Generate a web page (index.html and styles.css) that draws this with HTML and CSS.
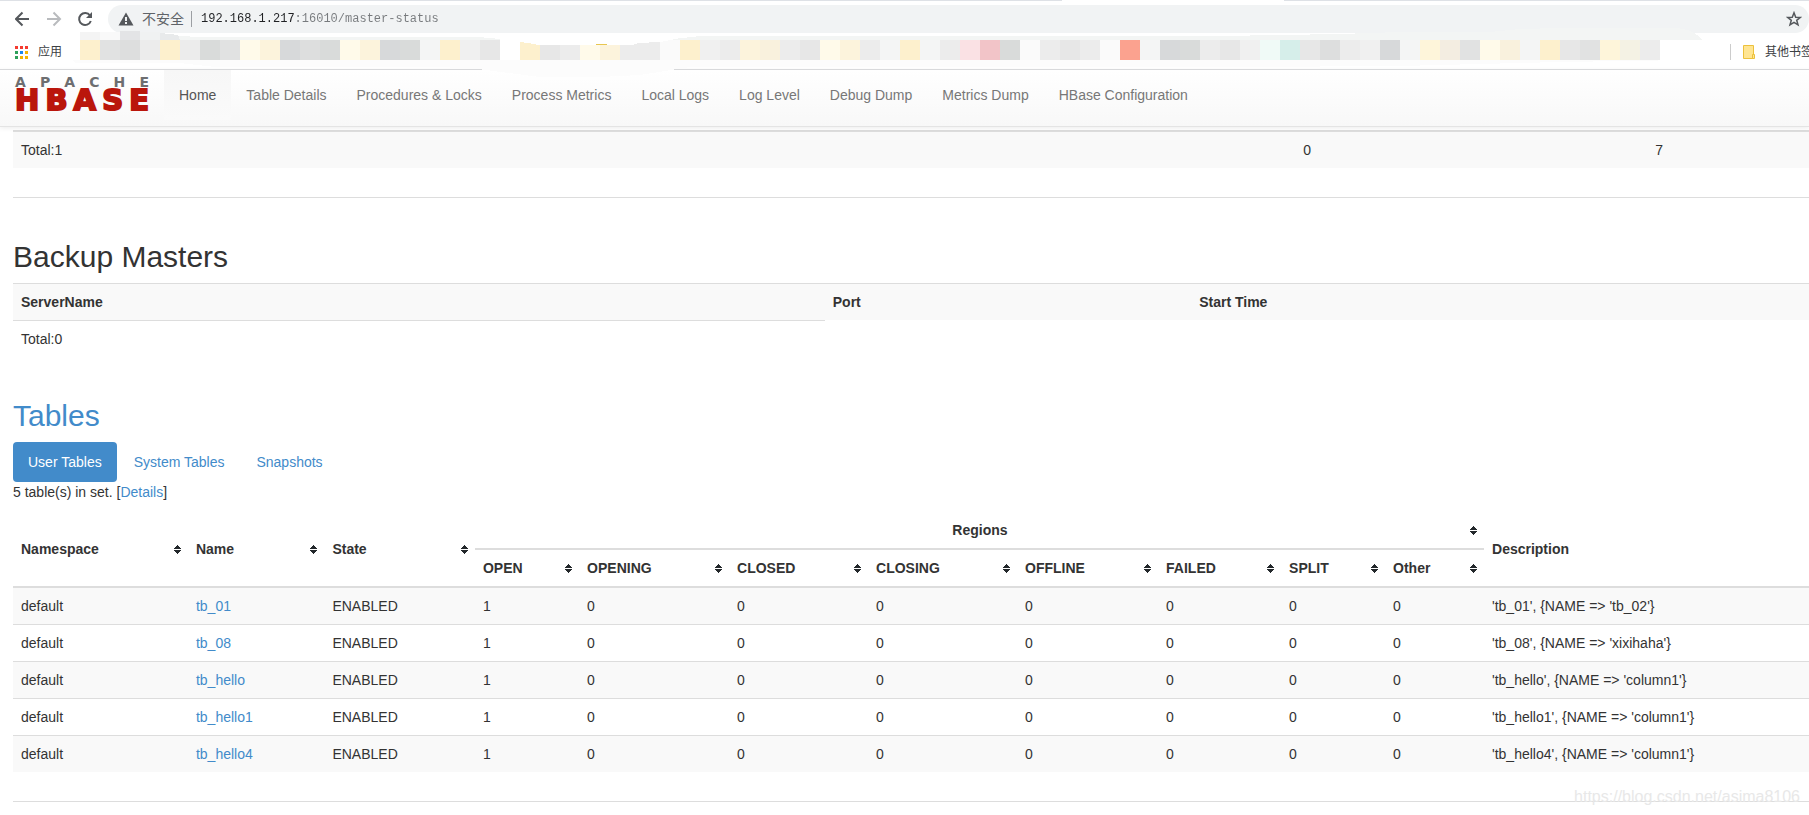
FILE: index.html
```html
<!DOCTYPE html>
<html lang="zh-CN">
<head>
<meta charset="utf-8">
<title>Master: HBase</title>
<link rel="stylesheet" href="styles.css">
</head>
<body>
<svg class="defs" aria-hidden="true">
  <symbol id="sort" viewBox="0 0 7 9"><path d="M3 0h1v1h1v1h1v1h1v1H0V3h1V2h1V1h1zM0 5h7v1H6v1H5v1H4v1H3V8H2V7H1V6H0z" fill="#23282b"/></symbol>
</svg>

<header class="browser">
  <div class="tabstrip"></div>
  <div class="toolbar">
    <button class="tool" type="button" aria-label="Back"><svg width="16" height="16" viewBox="0 0 16 16"><path d="M14 8H1.500M7.500 1.500L1 8l6.500 6.500" fill="none" stroke="#55585c" stroke-width="2"/></svg></button>
    <button class="tool" type="button" aria-label="Forward"><svg width="16" height="16" viewBox="0 0 16 16"><path d="M1 8h12.500M7.500 1.500L14 8l-6.500 6.500" fill="none" stroke="#b9bbbe" stroke-width="2"/></svg></button>
    <button class="tool" type="button" aria-label="Reload"><svg width="16" height="16" viewBox="0 0 16 16"><path d="M13 4.500A6 6 0 1 0 13.800 10" fill="none" stroke="#55585c" stroke-width="2"/><path d="M15 1v6H9z" fill="#55585c"/></svg></button>
    <div class="omnibox">
      <svg width="16" height="14" viewBox="0 0 16 14"><path d="M8 0.500L15.500 13.500H0.500z" fill="#55585c"/><path d="M7 5h2v4H7zM7 10h2v2H7z" fill="#f1f3f4"/></svg>
      <label class="insecure" for="url">不安全</label>
      <input class="url" id="url" type="text" value="192.168.1.217:16010/master-status" spellcheck="false">
      <button class="star" type="button" aria-label="Bookmark"><svg width="16" height="16" viewBox="0 0 16 16"><path d="M8 1.800l1.700 4.400 4.700.2-3.700 2.900 1.300 4.600L8 11.300l-4 2.600 1.300-4.600-3.700-2.900 4.700-.2z" fill="none" stroke="#55585c" stroke-width="1.500"/></svg></button>
    </div>
  </div>
  <div class="bookmarks">
    <a class="bookmark" href="#"><svg width="13" height="13" viewBox="0 0 13 13"><path d="M0 0h3v3H0zM5 0h3v3H5zM10 0h3v3h-3z" fill="#f43b30"/><path d="M0 5h3v3H0zM0 10h3v3H0z" fill="#2da05a"/><path d="M5 5h3v3H5z" fill="#1a87f0"/><path d="M10 5h3v3h-3zM5 10h3v3H5zM10 10h3v3h-3z" fill="#f5b400"/></svg>应用</a>
    <a class="bookmark other" href="#"><svg width="12" height="14" viewBox="0 0 12 14"><path d="M.5.500h10v13H.500z" fill="#ffe592" stroke="#ecc13c"/><path d="M9.500 9.500h2v4h-2z" fill="#ffe592" stroke="#ecc13c"/></svg>其他书签</a>
  </div>
  <svg class="mosaic" width="1635" height="50" viewBox="70 28 1635 50" shape-rendering="crispEdges" aria-hidden="true">
    <path d="M80 40V36H180L200 37H478L500 39V40zM665 40L700 36H1220L1340 34L1400 32H1490L1520 29L1560 28H1675Q1694 29 1702 40z" fill="#f3f5f4"/>
    <path d="M72 60H1690L1560 62L1400 66H1340L1300 67H690L640 75L600 77H540L478 69L440 67H215L180 63H76z" fill="#fcfcfc"/>
    <path d="M80 32h20v8H80z" fill="#f4f4f4"/><path d="M100 32h20v8h-20z" fill="#f9f9f9"/><path d="M120 31h20v9h-20z" fill="#e3e4e6"/><path d="M140 32h20v8h-20z" fill="#f0f2f2"/><path d="M160 33l18 2 2 5h-20z" fill="#e8eaeb"/>
    <g>
      <path d="M80 40h20v20H80zM160 40h20v20h-20zM440 40h20v20h-20zM520 40h20v20h-20zM680 40h20v20h-20zM900 40h20v20h-20zM1540 40h20v20h-20z" fill="#fdf0cd"/>
      <path d="M240 40h20v20h-20zM340 40h20v20h-20zM580 40h20v20h-20zM820 40h20v20h-20zM1480 40h20v20h-20z" fill="#fffaea"/>
      <path d="M260 40h20v20h-20zM360 40h20v20h-20zM600 40h20v20h-20zM740 40h20v20h-20zM840 40h20v20h-20z" fill="#fcf3dc"/>
      <path d="M1420 40h20v20h-20zM1600 40h20v20h-20z" fill="#fef5da"/>
      <path d="M760 40h20v20h-20zM1500 40h20v20h-20z" fill="#f9f1dd"/>
      <path d="M1440 40h20v20h-20z" fill="#f3ede1"/><path d="M1620 40h20v20h-20z" fill="#f4f2e4"/>
      <path d="M280 40h20v20h-20zM380 40h20v20h-20zM1160 40h20v20h-20zM1380 40h20v20h-20z" fill="#d7d9da"/>
      <path d="M200 40h20v20h-20zM320 40h20v20h-20zM400 40h20v20h-20zM1000 40h20v20h-20zM1180 40h20v20h-20z" fill="#d9dbda"/>
      <path d="M120 40h20v20h-20zM300 40h20v20h-20zM1320 40h20v20h-20z" fill="#dddede"/>
      <path d="M100 40h20v20h-20zM220 40h20v20h-20zM1460 40h20v20h-20zM1580 40h20v20h-20z" fill="#e1e2e2"/>
      <path d="M480 40h20v20h-20zM540 40h20v20h-20zM800 40h20v20h-20zM1060 40h20v20h-20zM1220 40h20v20h-20zM1300 40h20v20h-20zM1560 40h20v20h-20z" fill="#e7e7e7"/>
      <path d="M140 40h20v20h-20zM180 40h20v20h-20zM560 40h20v20h-20zM620 40h40v20h-40zM720 40h20v20h-20zM780 40h20v20h-20zM860 40h20v20h-20zM940 40h20v20h-20zM1040 40h20v20h-20zM1080 40h20v20h-20zM1200 40h20v20h-20zM1340 40h20v20h-20zM1640 40h20v20h-20z" fill="#ececec"/>
      <path d="M460 40h20v20h-20zM700 40h20v20h-20zM1240 40h20v20h-20zM1360 40h20v20h-20z" fill="#f0f0f0"/>
      <path d="M420 40h20v20h-20zM880 40h20v20h-20zM920 40h20v20h-20zM1140 40h20v20h-20zM1400 40h20v20h-20zM1520 40h20v20h-20z" fill="#f4f5f5"/>
      <path d="M660 40h20v20h-20zM1020 40h20v20h-20zM1100 40h20v20h-20z" fill="#fafafa"/>
      <path d="M960 40h20v20h-20z" fill="#fae1e4"/><path d="M980 40h20v20h-20z" fill="#f2c4c8"/>
      <path d="M1120 40h20v20h-20z" fill="#fba28f"/>
      <path d="M1260 40h20v20h-20z" fill="#f0faf7"/><path d="M1280 40h20v20h-20z" fill="#d6eeea"/>
    </g>
    <path d="M500 34H700L680 38L660 42L638 43L632 45H538L528 43L520 42V60H500z" fill="#fff"/>
    <path d="M596 44h11v1h-11z" fill="#e8c650"/>
  </svg>
</header>

<nav class="navbar">
  <a class="brand" href="#" aria-label="Apache HBase">
    <span class="apache"><span>A</span><span>P</span><span>A</span><span>C</span><span>H</span><span>E</span></span>
    <span class="hbase"><span>H</span><span>B</span><span>A</span><span>S</span><span>E</span></span>
  </a>
  <a class="nav-link active" href="#">Home</a>
  <a class="nav-link" href="#">Table Details</a>
  <a class="nav-link" href="#">Procedures &amp; Locks</a>
  <a class="nav-link" href="#">Process Metrics</a>
  <a class="nav-link" href="#">Local Logs</a>
  <a class="nav-link" href="#">Log Level</a>
  <a class="nav-link" href="#">Debug Dump</a>
  <a class="nav-link" href="#">Metrics Dump</a>
  <a class="nav-link" href="#">HBase Configuration</a>
</nav>

<main class="page">
  <table class="table servers">
    <colgroup><col class="s-name"><col class="s-rate"><col></colgroup>
    <tbody><tr><td>Total:1</td><td>0</td><td>7</td></tr></tbody>
  </table>
  <hr>

  <section class="section">
    <h2>Backup Masters</h2>
    <table class="table backup">
      <colgroup><col class="b-name"><col class="b-port"><col></colgroup>
      <tbody>
        <tr><th scope="col">ServerName</th><th scope="col">Port</th><th scope="col">Start Time</th></tr>
        <tr><td>Total:0</td></tr>
      </tbody>
    </table>
  </section>

  <section class="section">
    <h2><a href="#">Tables</a></h2>
    <div class="pills">
      <a class="pill active" href="#">User Tables</a>
      <a class="pill" href="#">System Tables</a>
      <a class="pill" href="#">Snapshots</a>
    </div>
    <p class="summary">5 table(s) in set. [<a href="#">Details</a>]</p>
    <table class="table regions">
      <colgroup><col class="c-ns"><col class="c-name"><col class="c-state"><col class="c-open"><col class="c-opening"><col class="c-closed"><col class="c-closing"><col class="c-offline"><col class="c-failed"><col class="c-split"><col class="c-other"><col></colgroup>
      <thead>
        <tr>
          <th rowspan="2"><button class="sort" type="button">Namespace<svg><use href="#sort"/></svg></button></th>
          <th rowspan="2"><button class="sort" type="button">Name<svg><use href="#sort"/></svg></button></th>
          <th rowspan="2"><button class="sort" type="button">State<svg><use href="#sort"/></svg></button></th>
          <th colspan="8"><button class="sort centered" type="button"><span>Regions</span><svg><use href="#sort"/></svg></button></th>
          <th rowspan="2">Description</th>
        </tr>
        <tr>
          <th><button class="sort" type="button">OPEN<svg><use href="#sort"/></svg></button></th>
          <th><button class="sort" type="button">OPENING<svg><use href="#sort"/></svg></button></th>
          <th><button class="sort" type="button">CLOSED<svg><use href="#sort"/></svg></button></th>
          <th><button class="sort" type="button">CLOSING<svg><use href="#sort"/></svg></button></th>
          <th><button class="sort" type="button">OFFLINE<svg><use href="#sort"/></svg></button></th>
          <th><button class="sort" type="button">FAILED<svg><use href="#sort"/></svg></button></th>
          <th><button class="sort" type="button">SPLIT<svg><use href="#sort"/></svg></button></th>
          <th><button class="sort" type="button">Other<svg><use href="#sort"/></svg></button></th>
        </tr>
      </thead>
      <tbody>
        <tr><td>default</td><td><a href="#">tb_01</a></td><td>ENABLED</td><td>1</td><td>0</td><td>0</td><td>0</td><td>0</td><td>0</td><td>0</td><td>0</td><td>'tb_01', {NAME =&gt; 'tb_02'}</td></tr>
        <tr><td>default</td><td><a href="#">tb_08</a></td><td>ENABLED</td><td>1</td><td>0</td><td>0</td><td>0</td><td>0</td><td>0</td><td>0</td><td>0</td><td>'tb_08', {NAME =&gt; 'xixihaha'}</td></tr>
        <tr><td>default</td><td><a href="#">tb_hello</a></td><td>ENABLED</td><td>1</td><td>0</td><td>0</td><td>0</td><td>0</td><td>0</td><td>0</td><td>0</td><td>'tb_hello', {NAME =&gt; 'column1'}</td></tr>
        <tr><td>default</td><td><a href="#">tb_hello1</a></td><td>ENABLED</td><td>1</td><td>0</td><td>0</td><td>0</td><td>0</td><td>0</td><td>0</td><td>0</td><td>'tb_hello1', {NAME =&gt; 'column1'}</td></tr>
        <tr><td>default</td><td><a href="#">tb_hello4</a></td><td>ENABLED</td><td>1</td><td>0</td><td>0</td><td>0</td><td>0</td><td>0</td><td>0</td><td>0</td><td>'tb_hello4', {NAME =&gt; 'column1'}</td></tr>
      </tbody>
    </table>
  </section>
  <hr>
</main>
<div class="watermark">https://blog.csdn.net/asima8106</div>
</body>
</html>
```

FILE: styles.css
```css
* { box-sizing: border-box; }

body {
  position: relative;
  min-height: 100vh;
  margin: 0;
  overflow-x: hidden;
  background: #fff;
  color: #333;
  font: 14px/20px "Liberation Sans", "Noto Sans CJK SC", sans-serif;
}

a { color: #428bca; text-decoration: none; }

button {
  margin: 0;
  padding: 0;
  border: 0;
  background: none;
  color: inherit;
  font: inherit;
  cursor: pointer;
}

svg { display: block; flex: none; }

.defs { position: absolute; width: 0; height: 0; }

/* Browser chrome */
.browser { position: relative; z-index: 2; }

.tabstrip {
  height: 1px;
  background: linear-gradient(to right, #dee1e6 1062px, #fff 1062px 1284px, #dee1e6 1284px);
}

.toolbar {
  display: flex;
  align-items: center;
  gap: 15px;
  padding: 4px 0 2px 15px;
}

.omnibox {
  display: flex;
  flex: 1;
  align-items: center;
  height: 28px;
  padding: 0 7px 0 10px;
  border-radius: 14px;
  background: #f1f3f4;
}

.insecure {
  margin: 0 7px 0 8px;
  color: #5f6368;
  font-size: 14px;
}

.url {
  flex: 1;
  min-width: 0;
  height: 16px;
  padding: 0 0 0 9px;
  border: 0;
  border-left: 1px solid #9c9fa3;
  outline: 0;
  background: linear-gradient(to right, #202124 13ch, #777a7d 13ch) content-box text;
  color: transparent;
  font: 12px/16px "Liberation Mono", monospace;
}

.bookmarks {
  display: flex;
  align-items: center;
  justify-content: space-between;
  height: 35px;
  padding-left: 15px;
  border-bottom: 1px solid #d8d9db;
}

.bookmark {
  display: flex;
  align-items: center;
  gap: 10px;
  height: 16px;
  color: #3c4043;
  font-size: 12px;
  line-height: 16px;
}

.bookmark.other {
  width: 79px;
  padding-left: 12px;
  border-left: 1px solid #ccc;
  overflow: hidden;
  white-space: nowrap;
}

.mosaic { position: absolute; top: 28px; left: 70px; pointer-events: none; }

/* Navigation */
.navbar {
  position: relative;
  z-index: 1;
  display: flex;
  align-items: flex-start;
  height: 57px;
  padding-left: 15px;
  border-bottom: 1px solid #e4e4e4;
  background: linear-gradient(#fff, #f8f8f8);
  box-shadow: 0 1px 5px rgba(0, 0, 0, 0.08);
}

.brand {
  width: 134px;
  margin-right: 15px;
  padding-top: 6px;
  font-family: "DejaVu Sans", sans-serif;
  font-weight: bold;
}

.apache, .hbase { display: flex; justify-content: space-between; }

.apache {
  color: #6d6e71;
  font-size: 14px;
  line-height: 13px;
}

.hbase {
  color: #ba160c;
  font-size: 29px;
  line-height: 22px;
  -webkit-text-stroke: 2px #ba160c;
}

.nav-link { padding: 15px; color: #777; }

.nav-link.active {
  background: linear-gradient(#f7f7f7, #fafafa);
  color: #555;
}

/* Page content */
.page { padding: 3px 0 0 13px; }

h2 {
  margin: 0 0 10px;
  font-size: 30px;
  font-weight: normal;
  line-height: 33px;
}

hr { height: 1px; margin: 29px 0 0; border: 0; background: #ddd; }

.section { margin-top: 42px; }

.table {
  width: 100%;
  border-spacing: 0;
  table-layout: fixed;
  text-align: left;
}

th, td { padding: 8px; }

.servers td { border-top: 2px solid #ddd; background: #f9f9f9; }
.s-name { width: 71.4%; }
.s-rate { width: 19.6%; }

.backup th, .backup td { border-top: 1px solid #ddd; }
.backup th { background: #f9f9f9; }
.b-name { width: 45.2%; }
.b-port { width: 20.4%; }

.pills { display: flex; gap: 2px; }

.pill { padding: 10px 15px; border-radius: 4px; }

.pill.active { background: #428bca; color: #fff; }

.summary { margin: 0 0 10px; }

.regions th { padding-right: 7px; border-bottom: 2px solid #ddd; }
.regions tbody tr:nth-child(odd) { background: #f9f9f9; }
.regions tbody tr + tr td { border-top: 1px solid #ddd; }

.sort {
  display: flex;
  align-items: center;
  justify-content: space-between;
  width: 100%;
}

.sort svg { width: 7px; height: 9px; }

.sort.centered span { flex: 1; padding-left: 7px; }

.c-ns { width: 9.74%; }
.c-name { width: 7.6%; }
.c-state { width: 8.38%; }
.c-open { width: 5.8%; }
.c-opening { width: 8.35%; }
.c-closed { width: 7.74%; }
.c-closing { width: 8.3%; }
.c-offline { width: 7.85%; }
.c-failed { width: 6.85%; }
.c-split { width: 5.79%; }
.c-other { width: 5.51%; }

.watermark {
  position: absolute;
  right: 9px;
  bottom: 8px;
  color: #e8e8e8;
  font-size: 16px;
}
```
